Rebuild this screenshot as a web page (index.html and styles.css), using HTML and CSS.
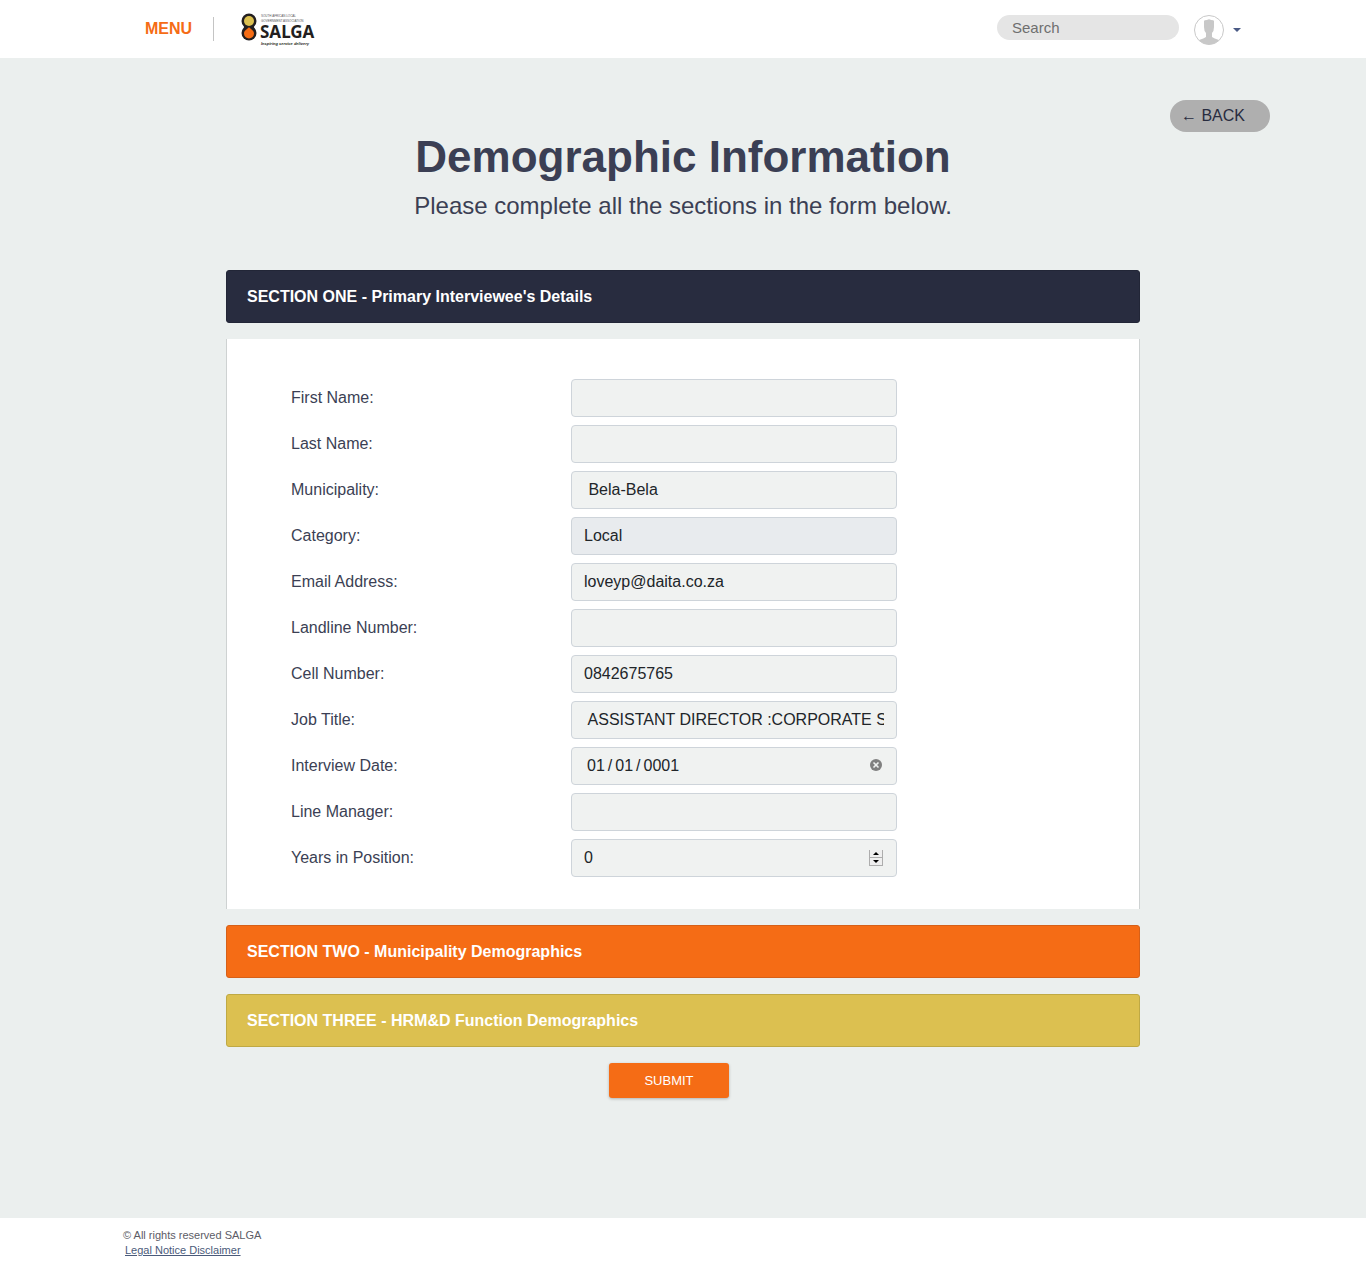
FILE: index.html
```html
<!DOCTYPE html>
<html lang="en">
<head>
<meta charset="utf-8">
<meta name="viewport" content="width=device-width, initial-scale=1">
<title>Demographic Information</title>
<link rel="stylesheet" href="styles.css">
</head>
<body>
<header class="topbar">
  <div class="topbar-inner">
    <button type="button" class="menu">MENU</button>
    <a class="logo" href="#" aria-label="SALGA">
      <svg width="82" height="40" viewBox="0 0 82 40" aria-hidden="true">
        <circle cx="9" cy="12" r="7.500" fill="#231f20"/>
        <circle cx="9" cy="24" r="7.500" fill="#231f20"/>
        <rect x="4" y="15" width="10" height="6" fill="#231f20"/>
        <circle cx="9" cy="12" r="5" fill="#dcc050"/>
        <path d="M9 18 C10 20 14 21 14 24.500 A5 5 0 0 1 4 24.500 C4 21 8 20 9 18Z" fill="#f56c15"/>
        <text class="logo-small" x="21" y="8">SOUTH AFRICAN LOCAL</text>
        <text class="logo-small" x="21" y="13">GOVERNMENT ASSOCIATION</text>
        <text class="logo-name" x="20" y="29">SALGA</text>
        <text class="logo-tag" x="21" y="36">Inspiring service delivery</text>
      </svg>
    </a>
    <input class="search" type="search" placeholder="Search" aria-label="Search">
    <button type="button" class="account" aria-label="Account">
      <svg width="30" height="30" viewBox="0 0 30 30" aria-hidden="true">
        <circle cx="15" cy="15" r="14.500" fill="#fff" stroke="#c8c8c8"/>
        <path d="M10 6 Q10 5 13 5 Q15 3.500 17 5 Q20 5 20 6 V12 Q20 16 18 18 V22 Q20 23.500 25 25 Q21 29.500 15 29.500 Q9 29.500 5 25 Q10 23.500 12 22 V18 Q10 16 10 12Z" fill="#c8c8c8"/>
      </svg>
      <svg width="8" height="4" viewBox="0 0 8 4" aria-hidden="true"><path d="M0 0H8L4 4Z" fill="#4a5a85"/></svg>
    </button>
  </div>
</header>

<main class="page">
  <div class="back-row"><a class="back" href="#">← BACK</a></div>
  <h1 class="title">Demographic Information</h1>
  <p class="subtitle">Please complete all the sections in the form below.</p>

  <form class="sections">
    <button type="button" class="bar bar-one" aria-expanded="true">SECTION ONE - Primary Interviewee's Details</button>
    <div class="panel">
      <label for="first">First Name:</label><input class="field" id="first" type="text">
      <label for="last">Last Name:</label><input class="field" id="last" type="text">
      <label for="muni">Municipality:</label><input class="field" id="muni" type="text" value=" Bela-Bela">
      <label for="cat">Category:</label><input class="field" id="cat" type="text" value="Local" readonly>
      <label for="email">Email Address:</label><input class="field" id="email" type="text" value="loveyp@daita.co.za">
      <label for="land">Landline Number:</label><input class="field" id="land" type="tel">
      <label for="cell">Cell Number:</label><input class="field" id="cell" type="tel" value="0842675765">
      <label for="job">Job Title:</label><input class="field" id="job" type="text" value=" ASSISTANT DIRECTOR :CORPORATE SERVICES">
      <label for="date">Interview Date:</label>
      <div class="control">
        <input class="field" id="date" type="date" value="0001-01-01">
        <button type="button" class="clear" aria-label="Clear date">
          <svg width="12" height="12" viewBox="0 0 12 12" aria-hidden="true"><circle cx="6" cy="6" r="6" fill="#808080"/><path d="M3.500 3.500L8.500 8.500M8.500 3.500L3.500 8.500" stroke="#f0f2f1" stroke-width="1.600"/></svg>
        </button>
      </div>
      <label for="manager">Line Manager:</label><input class="field" id="manager" type="text">
      <label for="years">Years in Position:</label>
      <div class="control">
        <input class="field" id="years" type="number" value="0">
        <div class="spinner">
          <button type="button" aria-label="Increase"><svg width="6" height="3" viewBox="0 0 6 3" aria-hidden="true"><path d="M0 3H6L3 0Z"/></svg></button>
          <button type="button" aria-label="Decrease"><svg width="6" height="3" viewBox="0 0 6 3" aria-hidden="true"><path d="M0 0H6L3 3Z"/></svg></button>
        </div>
      </div>
    </div>
    <button type="button" class="bar bar-two" aria-expanded="false">SECTION TWO - Municipality Demographics</button>
    <button type="button" class="bar bar-three" aria-expanded="false">SECTION THREE - HRM&amp;D Function Demographics</button>
    <div class="actions"><button type="submit" class="submit">SUBMIT</button></div>
  </form>
</main>

<footer class="footer">
  <div class="footer-inner">
    <p class="rights">© All rights reserved SALGA</p>
    <a class="legal" href="#">Legal Notice Disclaimer</a>
  </div>
</footer>
</body>
</html>
```
FILE: styles.css
```css
* {
  box-sizing: border-box;
}

body {
  display: flex;
  flex-direction: column;
  min-height: 100vh;
  margin: 0;
  background: #ebefee;
  color: #3b3f54;
  font: 16px/24px "Liberation Sans", Arial, sans-serif;
}

button,
input {
  font: inherit;
}

button {
  padding: 0;
  border: 0;
  background: none;
  cursor: pointer;
}

.topbar {
  background: #fff;
}

.topbar-inner {
  display: flex;
  align-items: center;
  max-width: 1140px;
  height: 58px;
  margin: 0 auto;
  padding: 0 12px 0 32px;
}

.menu {
  padding-right: 21px;
  border-right: 1px solid #c4c4c4;
  color: #f56c15;
  font-weight: bold;
}

.logo {
  display: flex;
  margin: 0 auto 0 26px;
}

.logo-small {
  fill: #55565a;
  font-size: 3px;
}

.logo-name {
  fill: #231f20;
  font: bold 17px "Noto Sans", sans-serif;
}

.logo-tag {
  fill: #231f20;
  font-size: 4px;
  font-style: italic;
  font-weight: bold;
}

.search {
  width: 182px;
  height: 25px;
  margin: 0 15px 3px 0;
  padding: 0 15px;
  border: 0;
  border-radius: 13px;
  background: #e5e5e5;
  font-size: 15px;
}

.search::placeholder {
  color: #6f6f6f;
}

.account {
  display: flex;
  align-items: center;
  gap: 9px;
  padding-top: 2px;
}

.page {
  flex: 1;
  padding: 42px 16px 120px;
}

.back-row {
  display: flex;
  justify-content: flex-end;
  max-width: 1174px;
  margin: 0 auto;
}

.back {
  width: 100px;
  padding: 4px 11px;
  border-radius: 16px;
  background: #afafaf;
  color: #282c3f;
  text-decoration: none;
}

.title {
  margin: 0;
  font-size: 44px;
  line-height: 50px;
  text-align: center;
}

.subtitle {
  margin: 8px 0 48px;
  font-size: 24px;
  line-height: 32px;
  text-align: center;
}

.sections {
  display: flex;
  flex-direction: column;
  gap: 16px;
  max-width: 914px;
  margin: 0 auto;
}

.bar {
  height: 53px;
  padding: 0 20px;
  border: 1px solid;
  border-radius: 3px;
  color: #fff;
  font-weight: bold;
  text-align: left;
}

.bar-one {
  border-color: #222637;
  background: #282c3f;
}

.bar-two {
  border-color: #d66018;
  background: #f56c15;
}

.bar-three {
  border-color: #bfa944;
  background: #dcc050;
}

.panel {
  display: grid;
  grid-template-columns: 280px minmax(0, 326px);
  row-gap: 8px;
  align-items: center;
  padding: 40px 64px 32px;
  border: solid #ced2d2;
  border-width: 0 1px;
  background: #fff;
}

.field {
  display: block;
  width: 100%;
  height: 38px;
  padding: 6px 12px;
  border: 1px solid #ced4da;
  border-radius: 4px;
  background: #f0f2f1;
  color: #212529;
}

.field:read-only {
  background: #e8ebee;
}

.control {
  position: relative;
}

.field::-webkit-datetime-edit {
  padding: 0 2px;
}

.field::-webkit-datetime-edit-text {
  padding: 0 2px;
}

.field::-webkit-calendar-picker-indicator {
  display: none;
}

.field::-webkit-inner-spin-button {
  display: none;
}

.clear {
  position: absolute;
  top: 12px;
  right: 15px;
  display: flex;
}

.spinner {
  position: absolute;
  top: 11px;
  right: 14px;
  display: flex;
  flex-direction: column;
  width: 14px;
}

.spinner button {
  display: flex;
  align-items: center;
  justify-content: center;
  height: 8px;
  border: solid #adadad;
  border-width: 0 1px 1px;
  background: #efefef;
}

.actions {
  display: flex;
  justify-content: center;
  padding-right: 28px;
}

.submit {
  width: 120px;
  height: 35px;
  border-radius: 3px;
  background: #f56c15;
  box-shadow: 0 1px 3px rgba(0, 0, 0, 0.25);
  color: #fff;
  font-size: 13px;
}

.footer {
  background: #fff;
}

.footer-inner {
  max-width: 1140px;
  margin: 0 auto;
  padding: 10px;
  font-size: 11px;
  line-height: 15px;
}

.rights {
  margin: 0;
  color: #5c5c66;
}

.legal {
  display: block;
  padding-left: 2px;
  color: #4a5a7a;
}
```
